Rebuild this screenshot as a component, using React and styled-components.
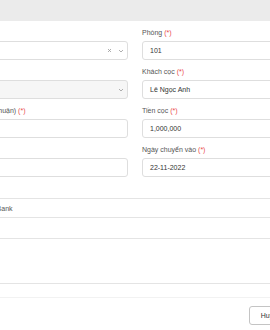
import React from "react";
import styled, { createGlobalStyle } from "styled-components";

const GlobalStyle = createGlobalStyle`
  html, body {
    margin: 0;
    padding: 0;
    background: #fff;
  }
  body {
    font-family: "Liberation Sans", Arial, sans-serif;
  }
`;

// the viewport only shows a slice of the modal
const Viewport = styled.div`
  width: 270px;
  height: 330px;
  overflow: hidden;
  background: #fff;
`;

const Modal = styled.div`
  width: 400px;
  margin-left: -62px;
  background: #fff;
`;

const Header = styled.div`
  height: 21px;
  background: #ebebeb;
`;

const Body = styled.div`
  padding: 7px 8px 0;
`;

const FormGrid = styled.div`
  display: grid;
  grid-template-columns: 178px 182px;
  column-gap: 14px;
  padding-left: 4px;
`;

const Group = styled.div`
  display: flex;
  flex-direction: column;
  margin-bottom: 7px;
`;

const Label = styled.label`
  font-size: 7px;
  line-height: 9px;
  color: #555;
  margin-bottom: 4px;
  white-space: nowrap;
`;

const Req = styled.span`
  color: #ea4b4b;
`;

const Field = styled.div`
  box-sizing: border-box;
  height: 19px;
  border: 1px solid #dedede;
  border-radius: 3px;
  background: ${(p) => (p.disabled ? "#f6f6f6" : "#fff")};
  display: flex;
  align-items: center;
  padding: 0 3px 0 7px;
  font-size: 7px;
  color: #333;
`;

const Value = styled.span`
  flex: 1;
  white-space: nowrap;
`;

const Icons = styled.span`
  display: flex;
  align-items: center;
  gap: 6px;
  color: #9a9a9a;
`;

const Table = styled.div`
  margin-top: 14px;
  border-top: 1px solid #e4e4e4;
`;

const Row = styled.div`
  box-sizing: border-box;
  height: ${(p) => p.h}px;
  border-bottom: 1px solid #e4e4e4;
  display: flex;
  align-items: center;
  font-size: 7px;
  color: #555;
  white-space: nowrap;
`;

const Footer = styled.div`
  margin-top: 13px;
  border-top: 1px solid #f2f2f2;
  padding: 8px 11px 0 8px;
  display: flex;
  justify-content: flex-end;
  gap: 6px;
`;

const Button = styled.button`
  box-sizing: border-box;
  height: 19px;
  min-width: 36px;
  padding: 0 9px;
  border: 1px solid ${(p) => (p.primary ? "#2f80ed" : "#c4c4c4")};
  border-radius: 3px;
  background: ${(p) => (p.primary ? "#2f80ed" : "#fff")};
  color: ${(p) => (p.primary ? "#fff" : "#333")};
  font-family: "Liberation Sans", Arial, sans-serif;
  font-size: 7px;
`;

const Clear = () => (
  <svg width="5" height="5" viewBox="0 0 10 10">
    <path d="M2 2 L8 8 M8 2 L2 8" stroke="currentColor" strokeWidth="1.6" />
  </svg>
);

const Chevron = () => (
  <svg width="6" height="4" viewBox="0 0 12 8">
    <path d="M2 2 L6 6 L10 2" fill="none" stroke="currentColor" strokeWidth="1.6" />
  </svg>
);

const FormItem = ({ label, value, select, clearable, disabled }) => (
  <Group>
    <Label>
      {label} <Req>(*)</Req>
    </Label>
    <Field disabled={disabled}>
      <Value>{value}</Value>
      {select && (
        <Icons>
          {clearable && <Clear />}
          <Chevron />
        </Icons>
      )}
    </Field>
  </Group>
);

export default function App() {
  return (
    <Viewport>
      <GlobalStyle />
      <Modal>
        <Header />
        <Body>
          <FormGrid>
            <FormItem label="Nhà" value="A1" select clearable />
            <FormItem label="Phòng" value="101" />
            <FormItem label="Tầng" value="" select disabled />
            <FormItem label="Khách cọc" value="Lê Ngọc Anh" />
            <FormItem label="Giá thuê (thỏa thuận)" value="" />
            <FormItem label="Tiền cọc" value="1,000,000" />
            <FormItem label="Hạn" value="" />
            <FormItem label="Ngày chuyển vào" value="22-11-2022" />
          </FormGrid>
          <Table>
            <Row h={19}>Ngân hàng: MB Bank</Row>
            <Row h={21} />
            <Row h={45} />
          </Table>
        </Body>
        <Footer>
          <Button>Huỷ</Button>
          <Button primary>Lưu</Button>
        </Footer>
      </Modal>
    </Viewport>
  );
}
